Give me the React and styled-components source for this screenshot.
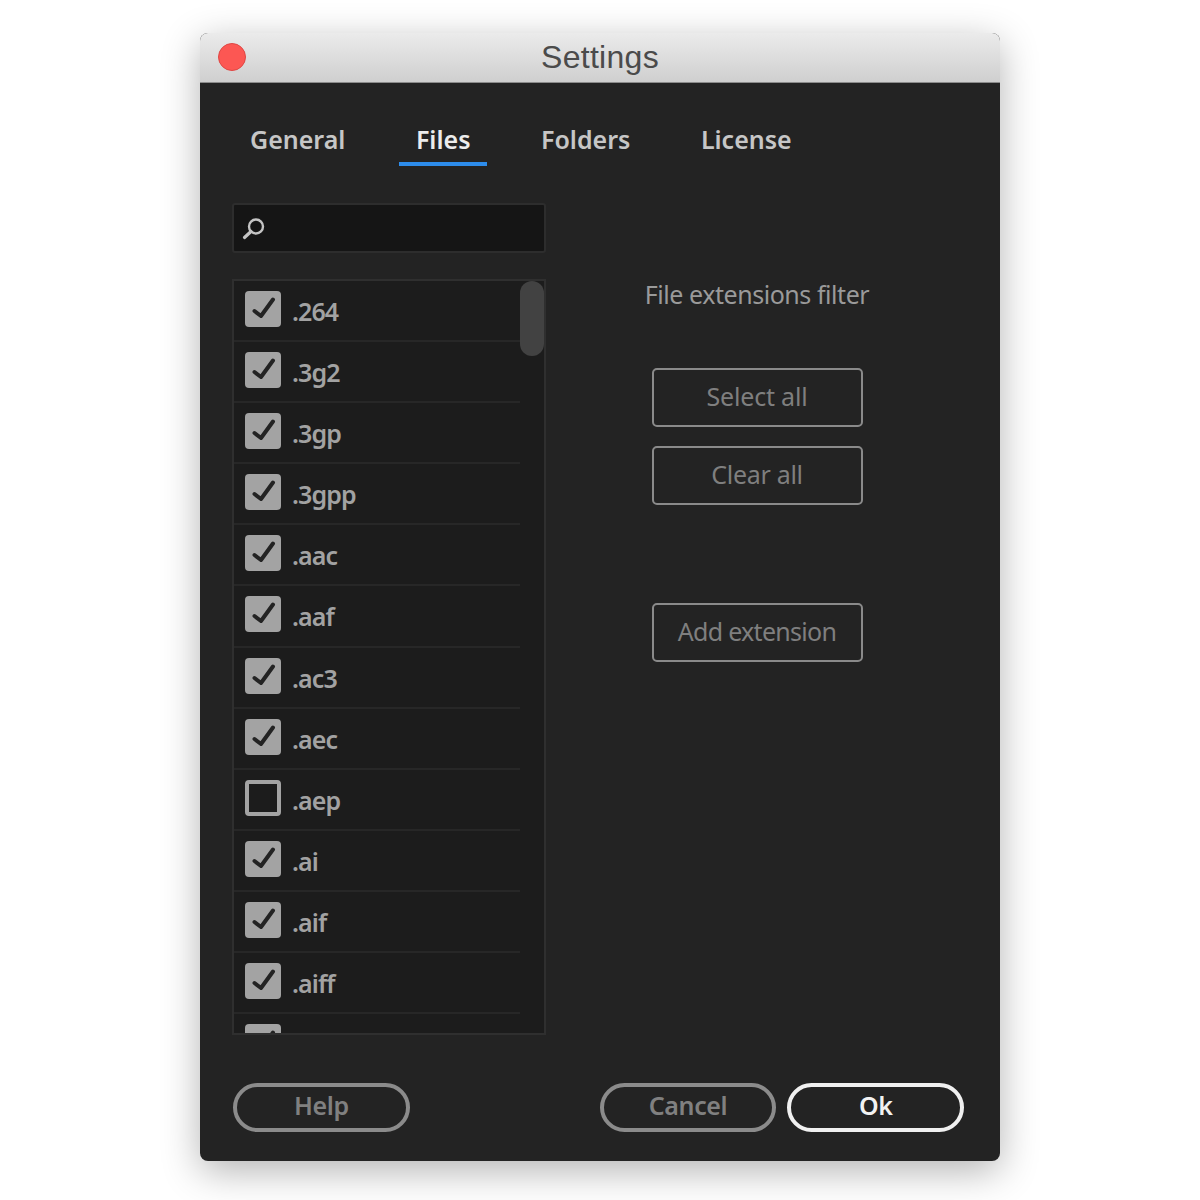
import React from 'react';
import styled, { createGlobalStyle } from 'styled-components';

const GlobalStyle = createGlobalStyle`
  html, body {
    margin: 0;
    padding: 0;
    background: #fff;
  }
  * {
    box-sizing: border-box;
  }
`;

const uiFont = `"Noto Sans", "Open Sans", sans-serif`;

const Page = styled.div`
  width: 1200px;
  height: 1200px;
  padding-top: 33px;
  overflow: hidden;
  font-family: ${uiFont};
`;

const Window = styled.div`
  width: 800px;
  height: 1128px;
  margin: 0 auto;
  display: flex;
  flex-direction: column;
  background: #232323;
  border-radius: 8px;
  overflow: hidden;
  box-shadow: 0 10px 38px rgba(0, 0, 0, 0.3);
`;

const TitleBar = styled.div`
  flex: none;
  height: 50px;
  padding: 0 18px;
  display: grid;
  grid-template-columns: 1fr auto 1fr;
  align-items: center;
  background: linear-gradient(#ebebeb, #cfcfcf);
  border-bottom: 1px solid #8c8c8c;
`;

const CloseLight = styled.span`
  width: 28px;
  height: 28px;
  margin-top: -2px;
  border-radius: 50%;
  background: #fc5753;
  border: 1px solid #df4744;
`;

const Title = styled.div`
  font-family: "Liberation Sans", sans-serif;
  font-size: 32px;
  letter-spacing: 0.3px;
  color: #4b4b4b;
`;

const Tabs = styled.div`
  flex: none;
  height: 83px;
  padding-left: 33px;
  display: flex;
  gap: 36.5px;
`;

const Tab = styled.div`
  height: 83px;
  padding: 36px 17px 0;
  font-size: 25px;
  line-height: 40px;
  font-weight: 600;
  letter-spacing: 0;
  color: ${(p) => (p.$active ? '#ececec' : '#c6c6c6')};
  border-bottom: 4px solid ${(p) => (p.$active ? '#2d8ceb' : 'transparent')};
`;

const Content = styled.div`
  flex: 1;
  padding: 37px 36px 0 32px;
  display: flex;
  gap: 58px;
`;

const LeftColumn = styled.div`
  width: 314px;
  display: flex;
  flex-direction: column;
  gap: 26px;
`;

const SearchBox = styled.div`
  height: 50px;
  padding-left: 5px;
  display: flex;
  align-items: center;
  background: #151515;
  border: 2px solid #2d2d2d;
  border-radius: 3px;
`;

const List = styled.div`
  position: relative;
  height: 756px;
  background: #1c1c1c;
  border: 2px solid #2f2f2f;
  overflow: hidden;
`;

const Row = styled.div`
  width: 286px;
  height: 61.1px;
  padding: 10px 0 0 11px;
  display: flex;
  gap: 11px;
  border-bottom: 2px solid #272727;
`;

const CheckBox = styled.span`
  flex: none;
  width: 36px;
  height: 36px;
  border-radius: 4px;
  background: ${(p) => (p.$checked ? '#a3a3a3' : 'transparent')};
  border: ${(p) => (p.$checked ? 'none' : '4px solid #a3a3a3')};
`;

const RowLabel = styled.span`
  font-size: 25px;
  line-height: 40px;
  font-weight: 600;
  letter-spacing: -0.9px;
  color: #a2a2a2;
`;

const ScrollThumb = styled.div`
  position: absolute;
  top: 0;
  right: 0;
  width: 24px;
  height: 75px;
  border-radius: 12px;
  background: #424242;
`;

const RightColumn = styled.div`
  width: 306px;
  padding-top: 71px;
  display: flex;
  flex-direction: column;
  align-items: center;
`;

const FilterLabel = styled.div`
  font-size: 25px;
  line-height: 40px;
  letter-spacing: -0.45px;
  color: #9a9a9a;
  margin-bottom: 54px;
`;

const ActionButton = styled.button`
  width: 211px;
  height: 59px;
  margin-bottom: ${(p) => p.$gap}px;
  padding: 0 0 3px;
  background: transparent;
  border: 2px solid #8a8a8a;
  border-radius: 5px;
  font-family: ${uiFont};
  font-size: 25px;
  letter-spacing: ${(p) => p.$tracking}px;
  color: #7f7f7f;
`;

const Footer = styled.div`
  flex: none;
  height: 78px;
  padding: 0 36px 29px 33px;
  display: flex;
  align-items: center;
  gap: 11px;
`;

const PillButton = styled.button`
  width: 177px;
  height: 49px;
  margin-right: ${(p) => p.$push || 0}px;
  padding: 0 0 5px;
  background: transparent;
  border: 4px solid ${(p) => (p.$primary ? '#f0f0f0' : '#8b8b8b')};
  border-radius: 25px;
  font-family: ${uiFont};
  font-size: 25px;
  font-weight: 600;
  letter-spacing: -0.4px;
  color: ${(p) => (p.$primary ? '#f2f2f2' : '#808080')};
`;

const tabs = ['General', 'Files', 'Folders', 'License'];

const extensions = [
  ['.264', true],
  ['.3g2', true],
  ['.3gp', true],
  ['.3gpp', true],
  ['.aac', true],
  ['.aaf', true],
  ['.ac3', true],
  ['.aec', true],
  ['.aep', false],
  ['.ai', true],
  ['.aif', true],
  ['.aiff', true],
  ['', true],
];

function SearchIcon() {
  return (
    <svg width="28" height="28" viewBox="0 0 28 28" fill="none" stroke="#c4c4c4">
      <circle cx="17" cy="12.5" r="7" strokeWidth="2.4" />
      <path d="M12 17.5 5.5 23.5" strokeWidth="3.2" strokeLinecap="round" />
    </svg>
  );
}

function CheckMark() {
  return (
    <svg width="36" height="36" viewBox="0 0 36 36" fill="none" stroke="#232323" strokeWidth="4" strokeLinecap="round" strokeLinejoin="round">
      <path d="M9.5 20 16 25 28 8.5" />
    </svg>
  );
}

export default function App() {
  return (
    <Page>
      <GlobalStyle />
      <Window>
        <TitleBar>
          <CloseLight />
          <Title>Settings</Title>
        </TitleBar>
        <Tabs>
          {tabs.map((tab) => (
            <Tab key={tab} $active={tab === 'Files'}>
              {tab}
            </Tab>
          ))}
        </Tabs>
        <Content>
          <LeftColumn>
            <SearchBox>
              <SearchIcon />
            </SearchBox>
            <List>
              {extensions.map(([name, checked], i) => (
                <Row key={name || i}>
                  <CheckBox $checked={checked}>{checked && <CheckMark />}</CheckBox>
                  <RowLabel>{name}</RowLabel>
                </Row>
              ))}
              <ScrollThumb />
            </List>
          </LeftColumn>
          <RightColumn>
            <FilterLabel>File extensions filter</FilterLabel>
            <ActionButton $gap={19} $tracking={-0.2}>Select all</ActionButton>
            <ActionButton $gap={98} $tracking={-0.3}>Clear all</ActionButton>
            <ActionButton $gap={0} $tracking={-0.7}>Add extension</ActionButton>
          </RightColumn>
        </Content>
        <Footer>
          <PillButton $push={179}>Help</PillButton>
          <PillButton>Cancel</PillButton>
          <PillButton $primary>Ok</PillButton>
        </Footer>
      </Window>
    </Page>
  );
}
